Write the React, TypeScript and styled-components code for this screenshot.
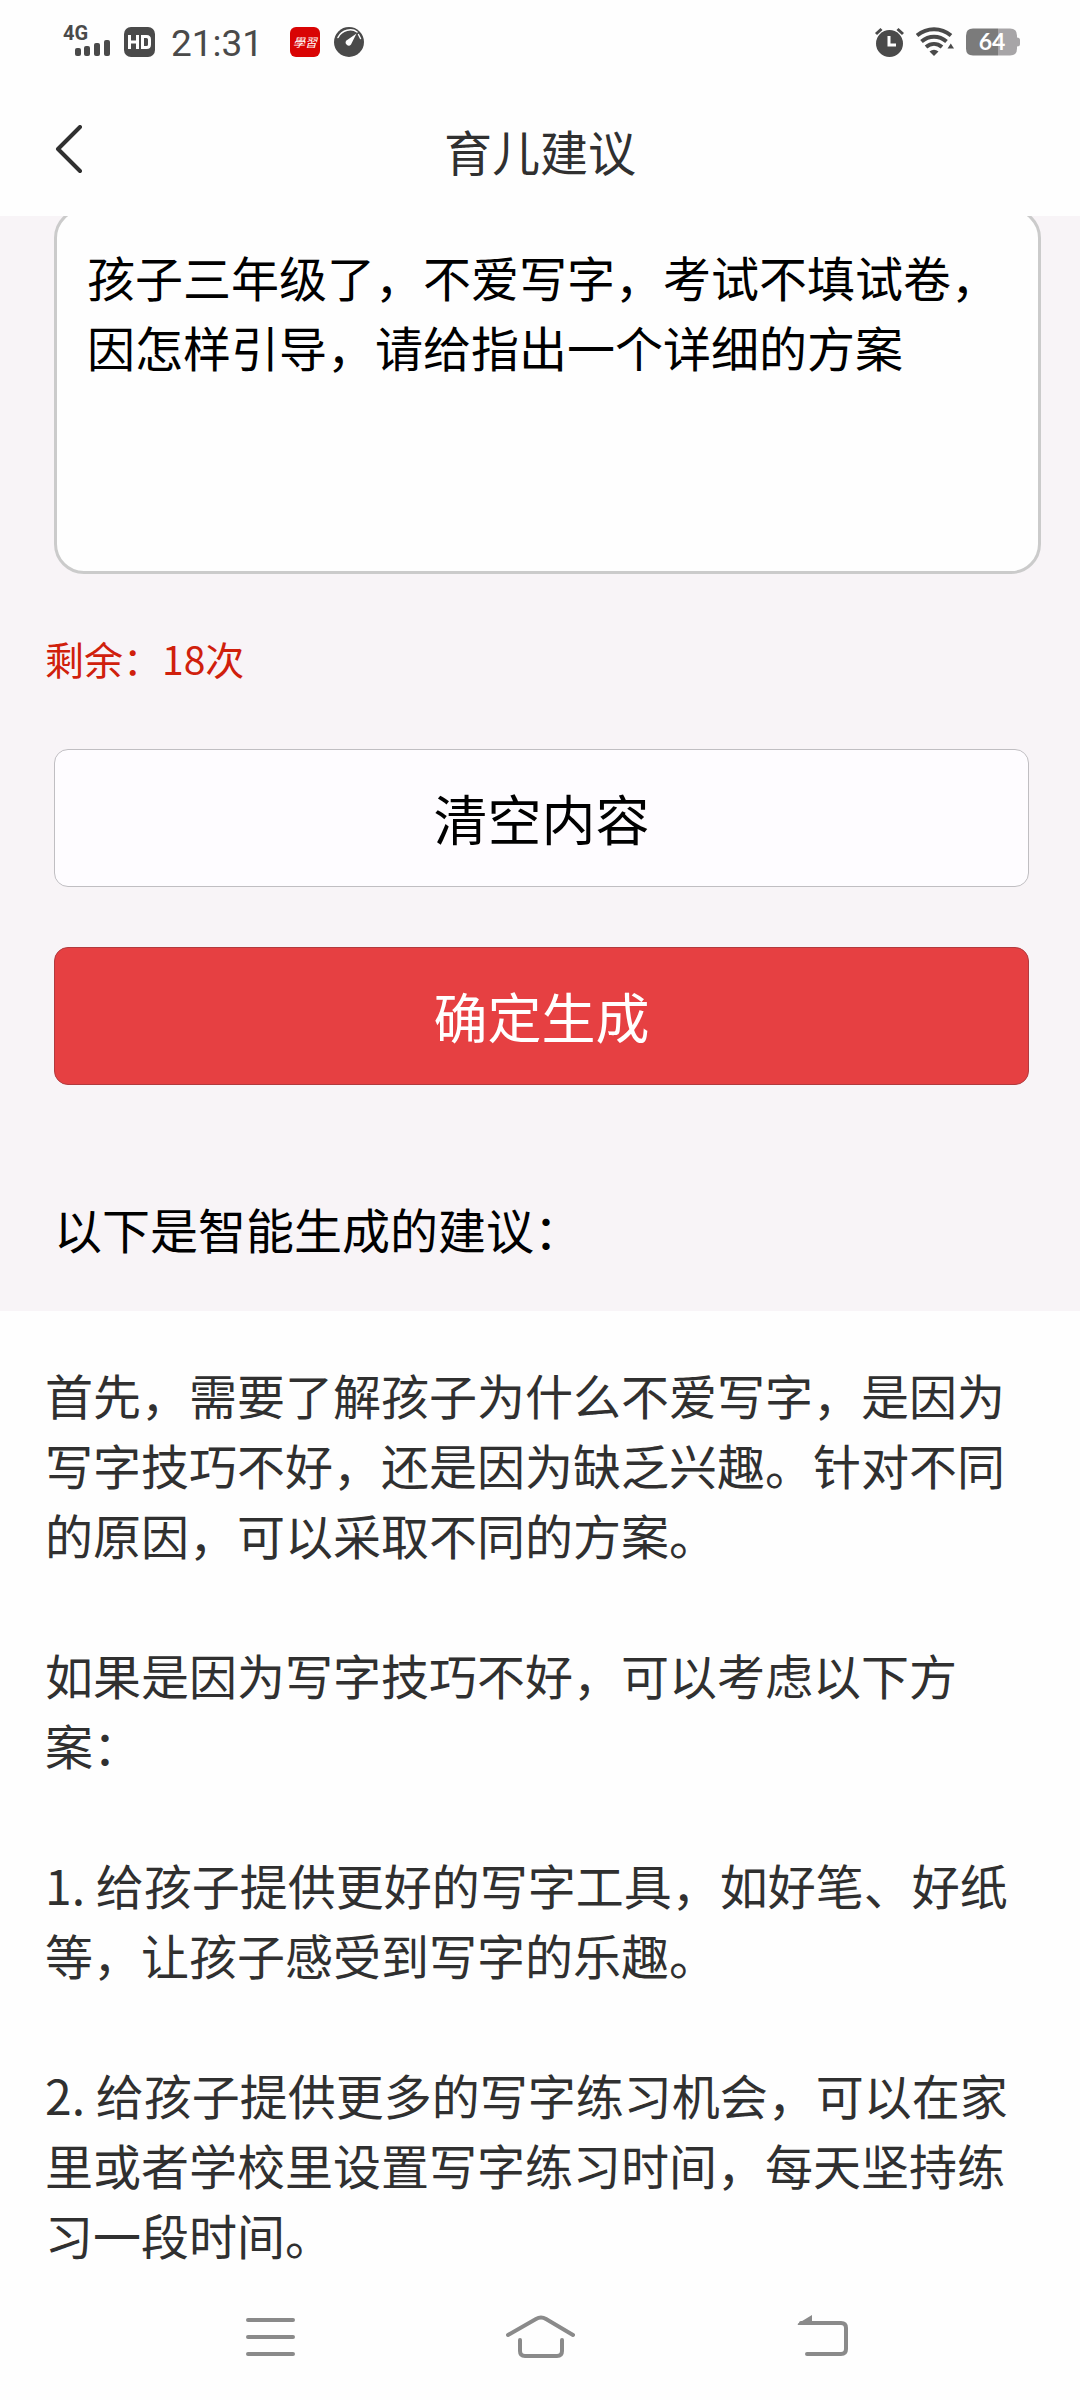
import React, { useState } from "react";
import styled, { createGlobalStyle } from "styled-components";

const GlobalStyle = createGlobalStyle`
  *, *::before, *::after { box-sizing: border-box; }
  body {
    margin: 0;
    background: #fefefe;
    font-family: "Noto Sans CJK SC", sans-serif;
    font-size: 48px;
    line-height: 70px;
    color: #303030;
  }
  button, textarea { font-family: inherit; }
`;

const Page = styled.div`
  display: flex;
  flex-direction: column;
  min-height: 100vh;
`;

const StatusBar = styled.div`
  display: flex;
  align-items: center;
  justify-content: space-between;
  height: 84px;
  padding: 0 60px 0 62px;
  color: #4a4a4a;
`;

const StatusGroup = styled.div<{ $gap: number }>`
  display: flex;
  align-items: center;
  gap: ${(p) => p.$gap}px;
  svg { display: block; }
`;

const Clock = styled.time`
  padding: 4px 13px 0 2px;
  font-family: Roboto, sans-serif;
  font-size: 37px;
  line-height: 44px;
`;

const TitleBar = styled.header`
  display: grid;
  grid-template-columns: 120px 1fr 120px;
  align-items: center;
  height: 132px;
`;

const Title = styled.h1`
  margin: 0;
  font-size: 48px;
  font-weight: 400;
  text-align: center;
`;

const BackButton = styled.button`
  display: flex;
  padding: 0 0 0 54px;
  border: 0;
  background: none;
  color: #303030;
`;

const Form = styled.form`
  display: flex;
  flex-direction: column;
  overflow: hidden;
  padding: 0 51px 48px 54px;
  background: #f8f4f7;
  color: #000;
`;

const Question = styled.textarea`
  display: block;
  width: calc(100% + 12px);
  height: 366px;
  margin: -8px 0 0;
  padding: 30px;
  border: 3px solid #cbcbcb;
  border-radius: 30px;
  outline: 0;
  resize: none;
  overflow: hidden;
  background: #fefefe;
  color: #000;
  font-size: 48px;
  line-height: 70px;
`;

const Remaining = styled.p`
  margin: 54px -9px 61px;
  font-size: 39px;
  line-height: 60px;
  color: #d0200c;
`;

const Actions = styled.div`
  display: flex;
  flex-direction: column;
  gap: 60px;
`;

const ActionButton = styled.button<{ $primary?: boolean }>`
  height: 138px;
  padding: 0;
  border: 1px solid ${(p) => (p.$primary ? "#b23a3e" : "#c0bec2")};
  border-radius: 14px;
  background: ${(p) => (p.$primary ? "#e64042" : "#fefcff")};
  color: ${(p) => (p.$primary ? "#fff" : "#000")};
  font-size: 54px;
  line-height: 70px;
`;

const ResultHeading = styled.h2`
  margin: 108px 0 0;
  font-size: 48px;
  font-weight: 400;
`;

const Result = styled.article`
  flex: 1;
  display: flex;
  flex-direction: column;
  gap: 70px;
  padding: 48px 45px 9px;
`;

const Paragraph = styled.p`
  margin: 0;
`;

const NavBar = styled.nav`
  display: grid;
  grid-template-columns: repeat(3, 1fr);
  width: 75%;
  height: 120px;
  margin: 0 auto;
`;

const NavButton = styled.button`
  display: flex;
  align-items: center;
  justify-content: center;
  padding: 0 0 6px;
  border: 0;
  background: none;
  color: #8a8a8a;
`;

const SignalIcon = () => (
  <svg width="48" height="48" viewBox="0 0 48 48" fill="currentColor" aria-label="4G">
    <text x="1" y="22" fontFamily="Roboto, sans-serif" fontWeight="700" fontSize="20">4G</text>
    <rect x="13" y="30" width="6" height="8" rx="2" />
    <rect x="22" y="28" width="6" height="10" rx="2" />
    <rect x="32" y="25" width="6" height="13" rx="2" />
    <rect x="42" y="22" width="6" height="16" rx="2" />
  </svg>
);

const HdIcon = () => (
  <svg width="31" height="30" viewBox="0 0 31 30" aria-label="HD">
    <rect width="31" height="30" rx="7" fill="currentColor" />
    <path d="M5.5 8v14M13.5 8v14M5.5 15h8M18.5 9.5v11h4q3 0 3-3v-5q0-3-3-3z" fill="none" stroke="#fff" strokeWidth="3" />
  </svg>
);

const StudyIcon = () => (
  <svg width="30" height="30" viewBox="0 0 30 30" aria-label="學習">
    <rect width="30" height="30" rx="6" fill="#d90404" />
    <text x="15" y="20" textAnchor="middle" fontFamily="Noto Sans CJK TC, sans-serif" fontStyle="italic" fontSize="12" fill="#fff">學習</text>
  </svg>
);

const GaugeIcon = () => (
  <svg width="30" height="30" viewBox="0 0 30 30" aria-hidden="true">
    <circle cx="15" cy="15" r="15" fill="currentColor" />
    <path d="M4 10.500C8 2.500 18 1 23 5" fill="none" stroke="#fff" strokeWidth="1.600" strokeLinecap="round" />
    <path d="M22.500 6.500L12.500 13.500a3 3 0 0 0 4.500 4z" fill="#fff" />
    <path d="M24.500 7.500l2 4" stroke="#fff" strokeWidth="1.400" strokeLinecap="round" />
  </svg>
);

const AlarmIcon = () => (
  <svg width="30" height="30" viewBox="0 0 30 30" aria-hidden="true">
    <circle cx="15.500" cy="16.500" r="13.500" fill="currentColor" />
    <path d="M2 7L7.500 2M29 7L23.500 2" stroke="currentColor" strokeWidth="3" />
    <path d="M15 9v9h7" fill="none" stroke="#fff" strokeWidth="3" />
  </svg>
);

const WifiIcon = () => (
  <svg width="38" height="30" viewBox="0 0 38 30" aria-hidden="true">
    <g fill="none" stroke="currentColor" strokeWidth="4">
      <path d="M1 8.500C11 0 25 0 35 8.500" />
      <path d="M5.500 14.500C13 8 23 8 30.500 14.500" />
      <path d="M10 20C15 16 21 16 26 20" />
    </g>
    <path d="M18 29l-4.500-4.500q4.500-3.500 9 0z" fill="currentColor" />
    <path d="M31.500 21.500h6.500l-3.200-5z" fill="currentColor" />
  </svg>
);

const BatteryIcon = () => (
  <svg width="54" height="28" viewBox="0 0 54 28" aria-label="64">
    <path d="M7 0.500h25v27H7q-7 0-7-7v-13q0-7 7-7z" fill="#7b7b7b" />
    <path d="M32 0.500h12q7 0 7 7v2q3 0 3 2.500v4q0 2.500-3 2.500v2q0 7-7 7H32z" fill="#a7a5a7" />
    <text x="26" y="22" textAnchor="middle" fontFamily="Lato, sans-serif" fontWeight="700" fontSize="23" fill="#fff">64</text>
  </svg>
);

const BackIcon = () => (
  <svg width="30" height="50" viewBox="0 0 30 50" fill="none" stroke="currentColor" strokeWidth="4" strokeLinecap="round" strokeLinejoin="round" aria-hidden="true">
    <path d="M26 2L4 24l22 22" />
  </svg>
);

const MenuIcon = () => (
  <svg width="50" height="44" viewBox="0 0 50 44" stroke="currentColor" strokeWidth="4" strokeLinecap="round" aria-hidden="true">
    <path d="M3 5h45M3 22h45M3 39h45" />
  </svg>
);

const HomeIcon = () => (
  <svg width="70" height="44" viewBox="0 0 70 44" fill="none" stroke="currentColor" strokeWidth="4" strokeLinecap="round" strokeLinejoin="round" aria-hidden="true">
    <path d="M3 20L31 4q5-3 10 0l27 16" />
    <path d="M15 25v11q0 5 5 5h32q5 0 5-5V25" />
  </svg>
);

const ReturnIcon = () => (
  <svg width="78" height="44" viewBox="-26 0 78 44" fill="none" stroke="currentColor" strokeWidth="4" strokeLinecap="round" aria-hidden="true">
    <path d="M4 8h40q5 0 5 5v21q0 5-5 5H10" />
    <path d="M1 8.500L15 0v10H2q-2 0-1-1.500z" fill="currentColor" stroke="none" />
  </svg>
);

const advice = [
  "首先，需要了解孩子为什么不爱写字，是因为写字技巧不好，还是因为缺乏兴趣。针对不同的原因，可以采取不同的方案。",
  "如果是因为写字技巧不好，可以考虑以下方案：",
  "1. 给孩子提供更好的写字工具，如好笔、好纸等，让孩子感受到写字的乐趣。",
  "2. 给孩子提供更多的写字练习机会，可以在家里或者学校里设置写字练习时间，每天坚持练习一段时间。",
];

export default function App() {
  const [question, setQuestion] = useState(
    "孩子三年级了，不爱写字，考试不填试卷，因怎样引导，请给指出一个详细的方案"
  );

  return (
    <Page lang="zh-CN">
      <GlobalStyle />
      <StatusBar>
        <StatusGroup $gap={14}>
          <SignalIcon />
          <HdIcon />
          <Clock>21:31</Clock>
          <StudyIcon />
          <GaugeIcon />
        </StatusGroup>
        <StatusGroup $gap={12}>
          <AlarmIcon />
          <WifiIcon />
          <BatteryIcon />
        </StatusGroup>
      </StatusBar>
      <TitleBar>
        <BackButton type="button" aria-label="返回">
          <BackIcon />
        </BackButton>
        <Title>育儿建议</Title>
      </TitleBar>
      <Form onSubmit={(e) => e.preventDefault()}>
        <Question
          aria-label="问题"
          spellCheck={false}
          value={question}
          onChange={(e) => setQuestion(e.target.value)}
        />
        <Remaining>剩余：18次</Remaining>
        <Actions>
          <ActionButton type="button" onClick={() => setQuestion("")}>清空内容</ActionButton>
          <ActionButton type="submit" $primary>确定生成</ActionButton>
        </Actions>
        <ResultHeading>以下是智能生成的建议：</ResultHeading>
      </Form>
      <Result>
        {advice.map((text) => (
          <Paragraph key={text}>{text}</Paragraph>
        ))}
      </Result>
      <NavBar>
        <NavButton type="button" aria-label="菜单"><MenuIcon /></NavButton>
        <NavButton type="button" aria-label="主页"><HomeIcon /></NavButton>
        <NavButton type="button" aria-label="后退"><ReturnIcon /></NavButton>
      </NavBar>
    </Page>
  );
}
